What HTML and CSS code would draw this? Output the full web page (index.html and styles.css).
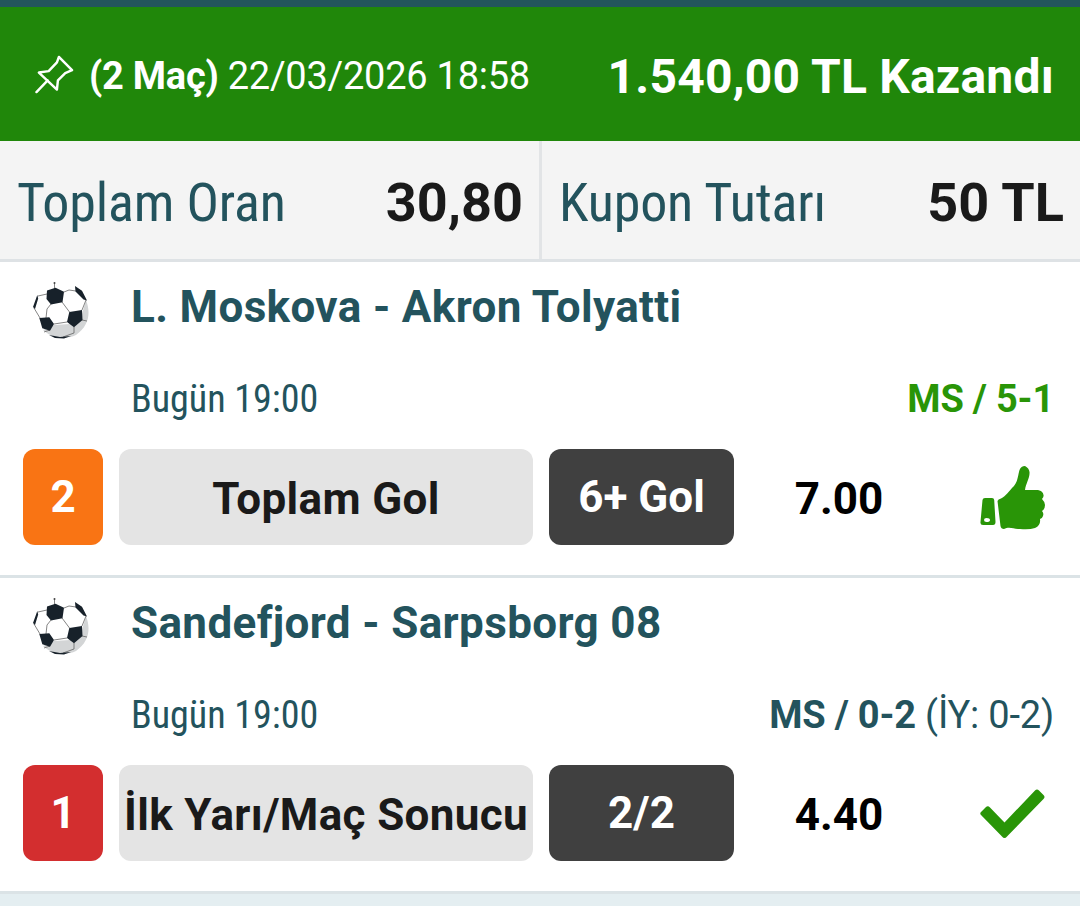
FILE: index.html
```html
<!DOCTYPE html>
<html lang="tr">
<head>
    <meta charset="UTF-8" />
    <meta name="viewport" content="width=device-width, initial-scale=1.0"/>
    <title>Kupon Detayı</title>
    <link rel="stylesheet" href="styles.css">
</head>
<body>
    <!-- Ball is shared by every match row -->
    <svg class="defs" width="0" height="0">
        <symbol id="ball" viewBox="0 0 58 60">
            <path d="M54 18 C59 31 57 44 44 53 C34 58 19 56 11 48 L22 43 L38 42 L50 32Z" fill="#d3d5d6"/>
            <path d="M32 10 L44 8 L53 18 L50 29 L37 30 L30 20Z M19 22 L30 20 L37 30 L35 41 L22 43 L14 35Z" fill="#fff"/>
            <path d="M22.500 1 V7 M32 10 L37 8 L44 9 M15 12 L6 14 M19 22 L15 27 L14 36 M30 20 L37.500 30 M22 42 L35 40 M50 28 L54 18 M18 48 L12 50 M42 45 L42 51 L31 55 M50 38 L55 39 M2 26 L8 36" fill="none" stroke="#666" stroke-width="0.8"/>
            <path d="M15 8.500 L23.500 5.700 L32 9.700 L30.500 20.300 L19 22.500 L14.500 17Z M43 4 L50 8.700 L55 18.500 L51.500 17.500 L43.500 9.500Z M5.300 13 L6.200 16.500 L3 27 L1 25Z M7.300 36 L17.300 35.300 L22 42 L18 48.700 L10.300 46.300Z M37.300 30 L50 28 L50.500 38 L42 45.300 L35 40Z M17 53 L28 55 L39 54 L32 56.500 L23 56Z" fill="#17212a"/>
            <circle cx="22.500" cy="1" r="1" fill="#444"/>
        </symbol>
    </svg>

    <div class="coupon">
        <div class="coupon-header">
            <svg class="pin" viewBox="0 0 40 40">
                <path d="M24.500 2 L38 15.500 L31 18.500 L23.500 26 L22.500 35.500 L4 18 L14 16.500 L22.500 7.500Z M13 26 L1.500 38"/>
            </svg>
            <span class="date"><b>(2 Maç)</b> 22/03/2026 18:58</span>
            <span class="won">1.540,00 TL Kazandı</span>
        </div>

        <div class="totals">
            <div class="total">
                <span class="total-label">Toplam Oran</span>
                <span class="total-value">30,80</span>
            </div>
            <div class="total">
                <span class="total-label">Kupon Tutarı</span>
                <span class="total-value">50 TL</span>
            </div>
        </div>

        <div class="match">
            <div class="match-title">
                <svg class="ball"><use href="#ball"/></svg>
                <h2>L. Moskova - Akron Tolyatti</h2>
            </div>
            <div class="match-info">
                <span class="time">Bugün 19:00</span>
                <span class="score live"><b>MS / 5-1</b></span>
            </div>
            <div class="bet">
                <span class="mbs orange">2</span>
                <span class="market">Toplam Gol</span>
                <span class="pick">6+ Gol</span>
                <span class="odd">7.00</span>
                <svg class="status" viewBox="0 0 66 66">
                    <path fill-rule="evenodd" d="M5 33 H12 Q14 33 14.200 35 L15.500 57 Q15.500 60 13 60 H3 Q0 60 .5 57 L2.500 35 Q2.800 33 5 33Z M6.500 53 Q4 53 4 55 Q4 57 6.500 57 Q10 57 10 55 Q10 53 6.500 53Z"/>
                    <path d="M17.500 36 Q18 34 21 33.500 C26 31 29 26 34 21 C38 16 38 10 39.500 5 Q41 1 45 1 Q49 3 49.500 7 C50 13 46 18 45 25 H58 Q63 26 63.500 30 Q64 32 62 34 Q65 37 65 40 Q65 44 62 46 Q64 48 63 51 Q62 54 60 54 Q61 60 55 63 Q49 65 40 64 C34 64 29 61 24 64 Q21 64 20.500 61Z"/>
                </svg>
            </div>
        </div>

        <div class="match">
            <div class="match-title">
                <svg class="ball"><use href="#ball"/></svg>
                <h2>Sandefjord - Sarpsborg 08</h2>
            </div>
            <div class="match-info">
                <span class="time">Bugün 19:00</span>
                <span class="score"><b>MS / 0-2</b> (İY: 0-2)</span>
            </div>
            <div class="bet">
                <span class="mbs red">1</span>
                <span class="market">İlk Yarı/Maç Sonucu</span>
                <span class="pick">2/2</span>
                <span class="odd">4.40</span>
                <svg class="status" viewBox="0 -7.5 66 66">
                    <path d="M1.500 23 L6 18.500 Q8 17 10 19 L24.500 34 L55 2 Q57 0 59 2 L63.500 6.500 Q65.500 8.500 63.500 10.500 L27 48 Q24.500 51 22 48 L1.500 27 Q-1 25 1.500 23Z"/>
                </svg>
            </div>
        </div>
    </div>
</body>
</html>
```
FILE: styles.css
```css
/* Basic Styles */
* {
    box-sizing: border-box;
}

body {
    margin: 0;
    font-family: Roboto, sans-serif;
    background: #e4eef1;
    color: #23535d;
}

.defs {
    display: block;
}

.coupon {
    border-top: 7px solid #23555c;
    white-space: nowrap;
}

/* Header */
.coupon-header {
    display: flex;
    align-items: center;
    height: 134px;
    padding: 4px 26px 0 35px;
    background: #20870a;
    color: #fff;
}

.pin {
    width: 39px;
    height: 39px;
    margin: -4px 15px 0 0;
    fill: none;
    stroke: #fff;
    stroke-width: 2.5;
    stroke-linejoin: round;
    stroke-linecap: round;
}

.date {
    font-size: 38px;
    letter-spacing: -0.25px;
}

.won {
    margin-left: auto;
    font-size: 48px;
    font-weight: 700;
    letter-spacing: 0.2px;
}

/* Totals */
.totals {
    display: grid;
    grid-template-columns: 542px 1fr;
    height: 121px;
    background: #f4f4f4;
    border-bottom: 3px solid #dee2e5;
}

.total {
    display: flex;
    align-items: center;
    justify-content: space-between;
    padding: 4px 16px 0 17px;
    font-size: 54px;
}

.total:first-child {
    border-right: 3px solid #e2e4e6;
}

.total-label,
.time {
    font-stretch: 75%;
}

.total-label {
    letter-spacing: -0.15px;
}

.total-value {
    color: #1a1a1a;
    font-weight: 700;
}

/* Matches */
.match {
    height: 316px;
    padding: 20px 23px 0;
    background: #fff;
    border-bottom: 3px solid #dbe3e6;
}

.match-title {
    display: flex;
    height: 60px;
}

.ball {
    width: 58px;
    height: 60px;
    margin: 0 41px 0 9px;
}

.match h2 {
    margin: 0;
    font-size: 44px;
    line-height: 51px;
    font-weight: 700;
    letter-spacing: 0.36px;
}

.match-info {
    display: flex;
    justify-content: space-between;
    align-items: center;
    height: 107px;
    padding: 7px 3px 0 108px;
    font-size: 38px;
}

.score {
    letter-spacing: -0.2px;
}

.score.live {
    color: #299507;
}

/* Bet row */
.bet {
    display: grid;
    grid-template-columns: 80px 414px 185px 178px 66px;
    column-gap: 16px;
    height: 96px;
    font-size: 44px;
    line-height: 96px;
    font-weight: 700;
    text-align: center;
}

.mbs,
.market,
.pick {
    height: 96px;
    border-radius: 12px;
}

.mbs,
.pick {
    color: #fff;
}

.orange {
    background: #f97414;
}

.red {
    background: #d32e2f;
}

.market {
    line-height: 100px;
    letter-spacing: 0.35px;
    background: #e4e4e4;
    color: #1a1a1a;
}

.pick {
    background: #404040;
}

.odd {
    line-height: 100px;
    color: #000;
}

.status {
    width: 66px;
    height: 66px;
    margin: 16px 0 0 36px;
    fill: #299507;
}
```
